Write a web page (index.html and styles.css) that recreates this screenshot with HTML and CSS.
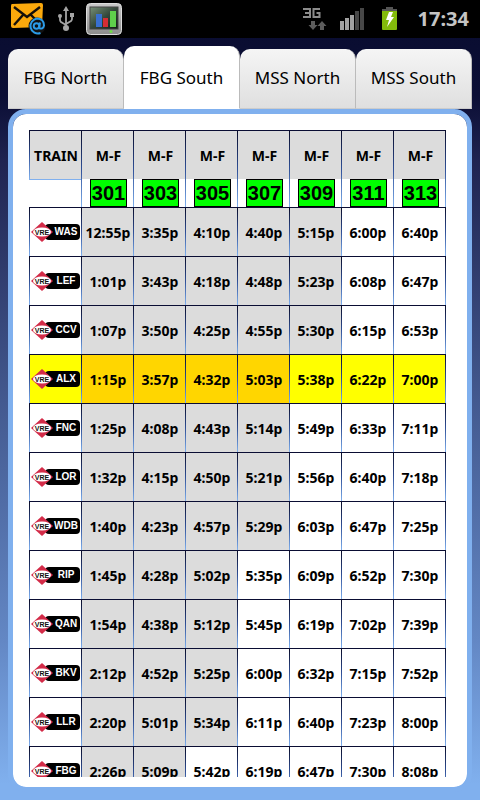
FILE: index.html
```html
<!DOCTYPE html>
<html lang="en">
<head>
<meta charset="utf-8">
<meta name="viewport" content="width=device-width, initial-scale=1">
<title>Train schedule</title>
<link rel="stylesheet" href="styles.css">
</head>
<body>
<header class="status">
  <svg class="icon-mail" width="36" height="34" viewBox="0 0 36 34" aria-hidden="true">
    <path d="M2 4Q2 2 3 2L32 1Q34 1 34 3L33 25 4 26Q2 26 2 24z" fill="#fba90c"/>
    <path d="M5 5 18 15 31 5M5 23 14 13M31 22 22 13" fill="none" stroke="#15100a" stroke-width="2.4"/>
    <circle cx="28" cy="24" r="8.5" fill="#111"/>
    <circle cx="27.500" cy="24" r="2.800" fill="none" stroke="#2b9be8" stroke-width="2"/>
    <path d="M31 20.500 30 26Q34 28 35 23.500C35 19 32 16.500 28 16.500A7.500 7.500 0 1 0 31.500 31" fill="none" stroke="#2b9be8" stroke-width="2"/>
  </svg>
  <svg class="icon-usb" width="18" height="26" viewBox="0 0 18 26" fill="none" stroke="#a4a4a4" stroke-width="1.800" aria-hidden="true">
    <path d="M9 4V23M3 11V14Q3 15 4 16L9 19M15 11V13Q15 14 14 15L9 18"/>
    <path d="M9 0 12 5H6zM13 7H17V11H13z" fill="#a4a4a4" stroke="none"/>
    <circle cx="3" cy="10" r="2" fill="#a4a4a4" stroke="none"/>
    <circle cx="9" cy="22" r="3" fill="#a4a4a4" stroke="none"/>
  </svg>
  <svg class="icon-chart" width="36" height="32" viewBox="0 0 36 32" aria-hidden="true">
    <defs>
      <linearGradient id="frame" x2="0" y2="1"><stop stop-color="#c9c9c9"/><stop offset="1" stop-color="#8c8c8c"/></linearGradient>
      <linearGradient id="screen" x2="1" y2="1"><stop stop-color="#779078"/><stop offset=".5" stop-color="#34483a"/><stop offset="1" stop-color="#111b14"/></linearGradient>
    </defs>
    <rect x=".5" y=".5" width="35" height="31" rx="4" fill="url(#frame)" stroke="#ddd"/>
    <rect x="4" y="4" width="28" height="22" fill="url(#screen)" stroke="#444"/>
    <path d="M10 11H16V24H10z" fill="#386fd0"/>
    <path d="M17 15H22V24H17z" fill="#d52d35"/>
    <path d="M24 8H30V24H24z" fill="#5fd04b"/>
    <circle cx="25" cy="28.500" r="1.500" fill="#6ddd46"/>
  </svg>
  <span class="spacer"></span>
  <svg class="icon-3g" width="25" height="24" viewBox="0 0 25 24" aria-hidden="true">
    <path d="M1 2H8V10H1M3 6H8M18 2H11.500V10H17.500V6H14.500" fill="none" stroke="#8c8c8c" stroke-width="2"/>
    <path d="M9 14H13V18H15.500L11 23 6.500 18H9zM18 23H22V19H24.500L20 14 15.500 19H18z" fill="#5c5c5c"/>
  </svg>
  <svg class="icon-signal" width="25" height="22" viewBox="0 0 25 22" aria-hidden="true">
    <path d="M0 13H4V22H0zM5 10H9V22H5zM10 7H14V22H10z" fill="#a2a2a2"/>
    <path d="M15 3H19V22H15zM20 0H24V22H20z" fill="#474747"/>
  </svg>
  <svg class="icon-battery" width="17" height="24" viewBox="0 0 17 24" aria-hidden="true">
    <path d="M5 0H12V2H16V6H1V2H5z" fill="#555"/>
    <path d="M1 4H16V22Q16 23 15 23H2Q1 23 1 22z" fill="#83bb0b"/>
    <path d="M8 5H12L10 10H13L6 20 8 13H5z" fill="#fff"/>
  </svg>
  <time class="clock">17:34</time>
</header>

<nav class="tabs">
  <a class="tab" href="#fbg-north">FBG North</a>
  <a class="tab active" href="#fbg-south" aria-current="page">FBG South</a>
  <a class="tab" href="#mss-north">MSS North</a>
  <a class="tab" href="#mss-south">MSS South</a>
</nav>

<main class="panel">
  <div class="scroll">
    <table class="schedule">
      <thead>
        <tr>
          <th scope="col" class="train"><div class="day">TRAIN</div></th>
          <th scope="col"><div class="day">M-F</div><span class="number">301</span></th>
          <th scope="col"><div class="day">M-F</div><span class="number">303</span></th>
          <th scope="col"><div class="day">M-F</div><span class="number">305</span></th>
          <th scope="col"><div class="day">M-F</div><span class="number">307</span></th>
          <th scope="col"><div class="day">M-F</div><span class="number">309</span></th>
          <th scope="col"><div class="day">M-F</div><span class="number">311</span></th>
          <th scope="col"><div class="day">M-F</div><span class="number">313</span></th>
        </tr>
      </thead>
      <tbody>
        <tr><th scope="row"><div class="station"><svg class="logo"><g id="vre"><path d="M11 0 22 10 11 20 0 10z" fill="#d32b48"/><ellipse cx="11" cy="10" rx="9" ry="4.500" fill="#fff"/><text x="11" y="12.500" text-anchor="middle" class="vre-text">VRE</text></g></svg><span>WAS</span></div></th><td class="past">12:55p</td><td class="past">3:35p</td><td class="past">4:10p</td><td class="past">4:40p</td><td class="past">5:15p</td><td>6:00p</td><td>6:40p</td></tr>
        <tr><th scope="row"><div class="station"><svg class="logo"><use href="#vre"/></svg><span>LEF</span></div></th><td class="past">1:01p</td><td class="past">3:43p</td><td class="past">4:18p</td><td class="past">4:48p</td><td class="past">5:23p</td><td>6:08p</td><td>6:47p</td></tr>
        <tr><th scope="row"><div class="station"><svg class="logo"><use href="#vre"/></svg><span>CCV</span></div></th><td class="past">1:07p</td><td class="past">3:50p</td><td class="past">4:25p</td><td class="past">4:55p</td><td class="past">5:30p</td><td>6:15p</td><td>6:53p</td></tr>
        <tr class="selected"><th scope="row"><div class="station"><svg class="logo"><use href="#vre"/></svg><span>ALX</span></div></th><td class="past">1:15p</td><td class="past">3:57p</td><td class="past">4:32p</td><td class="past">5:03p</td><td>5:38p</td><td>6:22p</td><td>7:00p</td></tr>
        <tr><th scope="row"><div class="station"><svg class="logo"><use href="#vre"/></svg><span>FNC</span></div></th><td class="past">1:25p</td><td class="past">4:08p</td><td class="past">4:43p</td><td class="past">5:14p</td><td>5:49p</td><td>6:33p</td><td>7:11p</td></tr>
        <tr><th scope="row"><div class="station"><svg class="logo"><use href="#vre"/></svg><span>LOR</span></div></th><td class="past">1:32p</td><td class="past">4:15p</td><td class="past">4:50p</td><td class="past">5:21p</td><td>5:56p</td><td>6:40p</td><td>7:18p</td></tr>
        <tr><th scope="row"><div class="station"><svg class="logo"><use href="#vre"/></svg><span>WDB</span></div></th><td class="past">1:40p</td><td class="past">4:23p</td><td class="past">4:57p</td><td class="past">5:29p</td><td>6:03p</td><td>6:47p</td><td>7:25p</td></tr>
        <tr><th scope="row"><div class="station"><svg class="logo"><use href="#vre"/></svg><span>RIP</span></div></th><td class="past">1:45p</td><td class="past">4:28p</td><td class="past">5:02p</td><td>5:35p</td><td>6:09p</td><td>6:52p</td><td>7:30p</td></tr>
        <tr><th scope="row"><div class="station"><svg class="logo"><use href="#vre"/></svg><span>QAN</span></div></th><td class="past">1:54p</td><td class="past">4:38p</td><td class="past">5:12p</td><td>5:45p</td><td>6:19p</td><td>7:02p</td><td>7:39p</td></tr>
        <tr><th scope="row"><div class="station"><svg class="logo"><use href="#vre"/></svg><span>BKV</span></div></th><td class="past">2:12p</td><td class="past">4:52p</td><td class="past">5:25p</td><td>6:00p</td><td>6:32p</td><td>7:15p</td><td>7:52p</td></tr>
        <tr><th scope="row"><div class="station"><svg class="logo"><use href="#vre"/></svg><span>LLR</span></div></th><td class="past">2:20p</td><td class="past">5:01p</td><td class="past">5:34p</td><td>6:11p</td><td>6:40p</td><td>7:23p</td><td>8:00p</td></tr>
        <tr><th scope="row"><div class="station"><svg class="logo"><use href="#vre"/></svg><span>FBG</span></div></th><td class="past">2:26p</td><td class="past">5:09p</td><td>5:42p</td><td>6:19p</td><td>6:47p</td><td>7:30p</td><td>8:08p</td></tr>
      </tbody>
    </table>
  </div>
</main>
</body>
</html>
```
FILE: styles.css
```css
* {
  box-sizing: border-box;
}

:root {
  --night: #0a0d33;
  --sky: #80b0ee;
  --line: linear-gradient(#080b28, #2f4f96 50%, #80b0ee);
}

body {
  margin: 0;
  height: 100vh;
  display: flex;
  flex-direction: column;
  overflow: hidden;
  background: linear-gradient(#090c2f, #0b0e35 12%, #1f2350 20%, #43598f 50%, #6387c4 80%, #80b0ee 98%);
  font-family: "Noto Sans", "Open Sans", sans-serif;
  color: #000;
}

/* Status bar */
.status {
  flex: none;
  height: 38px;
  padding: 0 11px 0 9px;
  display: flex;
  align-items: center;
  background: #000;
}

.icon-usb {
  margin-left: 12px;
}

.icon-chart {
  margin-left: 11px;
}

.spacer {
  flex: 1;
}

.icon-signal {
  margin-left: 13px;
}

.icon-battery {
  margin: 0 20px 0 16px;
}

.clock {
  font-size: 20px;
  line-height: 38px;
  font-weight: 700;
  color: #c4c4c4;
}

/* Tabs */
.tabs {
  flex: none;
  display: flex;
  align-items: flex-end;
  height: 71px;
  padding: 0 8px;
}

.tab {
  flex: 1;
  height: 60px;
  padding-bottom: 2px;
  display: flex;
  align-items: center;
  justify-content: center;
  border-right: 1px solid #bbb;
  border-bottom: 1px solid #ccc;
  border-radius: 10px 10px 0 0;
  background: linear-gradient(#f5f5f5, #dfdfdf);
  font-size: 17px;
  color: #000;
  text-decoration: none;
}

.tab.active {
  height: 63px;
  padding-bottom: 0;
  border-bottom-color: #fff;
  background: #fff;
}

/* Timetable */
.panel {
  flex: 1;
  min-height: 0;
  margin: 0 8px 8px;
  padding: 16px 21px 10px 16px;
  border: 5px solid var(--sky);
  border-radius: 18px;
  background: #fff;
  background-clip: padding-box;
}

.scroll {
  height: 100%;
  padding-right: 1px;
  overflow: hidden;
}

.schedule {
  width: 100%;
  table-layout: fixed;
  border-spacing: 0;
  font-size: 14px;
  font-weight: bold;
}

.schedule th,
.schedule td {
  position: relative;
  height: 49px;
  padding: 1px 0 0 2px;
  border-top: 1px solid var(--night);
  background: var(--line) left / 1px 100% no-repeat #fff;
  text-align: center;
}

.schedule tr > :last-child::after {
  content: "";
  position: absolute;
  top: -1px;
  right: -1px;
  bottom: 0;
  width: 1px;
  background: var(--line);
}

.schedule .past {
  background-color: #dcdcdc;
}

.schedule .selected > * {
  background-color: #ff0;
}

.schedule .selected .past {
  background-color: #ffd600;
}

.schedule tbody th {
  padding: 0 1px 0 2px;
}

.schedule thead th {
  height: 77px;
  padding: 0 0 0 1px;
  vertical-align: top;
}

.day {
  height: 48px;
  padding-left: 2px;
  line-height: 50px;
  background: #dcdcdc;
}

.schedule .train {
  padding: 0;
  background: #fff;
}

.train .day {
  height: 49px;
  border-bottom: 1px solid var(--sky);
  background: var(--line) left / 1px 100% no-repeat #dcdcdc;
}

.number {
  display: block;
  width: 37px;
  height: 28px;
  margin: 0 0 0 8px;
  border: 1px solid #000;
  background: #0f0;
  font: bold 20px/27px "Liberation Sans", Arial, sans-serif;
}

.station {
  display: flex;
  align-items: center;
}

.logo {
  position: relative;
  flex: none;
  width: 22px;
  height: 20px;
}

.vre-text {
  font: bold 7px "Liberation Sans", Arial, sans-serif;
  fill: #111;
}

.station span {
  flex: 1;
  height: 16px;
  margin-left: -8px;
  padding-left: 7px;
  border-radius: 4px;
  background: #000;
  color: #fff;
  font: bold 10px/16px "Liberation Sans", Arial, sans-serif;
}
```
